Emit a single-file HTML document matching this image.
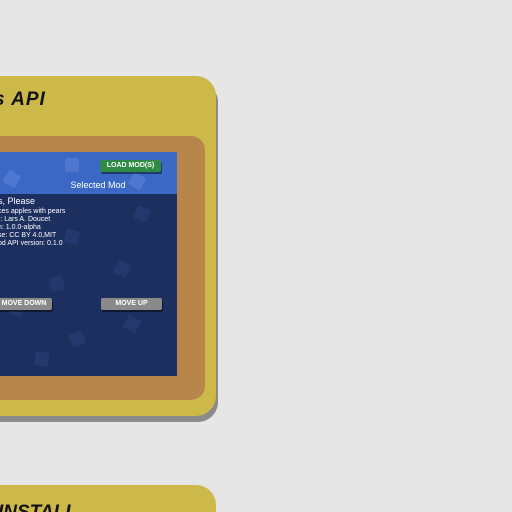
<!DOCTYPE html>
<html style="width:512px;height:512px;overflow:hidden"><head><style>
body{margin:0;width:512px;height:512px;background:#e6e6e6;position:relative;overflow:hidden;font-family:"Liberation Sans",sans-serif}
.a{position:absolute}
.card{background:#cdb84a;border-radius:20px;box-shadow:2px 6px 0 #8a8a8a}
.btn{position:absolute;height:12px;border-radius:2px;color:#fff;font-size:7px;font-weight:bold;text-align:center;line-height:12px;box-shadow:1px 2px 0 rgba(0,0,0,.45)}
.t{position:absolute;left:-2px;color:#fff;font-size:7px;white-space:nowrap}
.d{position:absolute;width:14px;height:14px;background:rgba(80,110,190,.15);border-radius:2px}
</style></head><body>
<div class="a card" style="left:-40px;top:76px;width:256px;height:340px"></div>
<div class="a" style="left:-6px;top:89px;font-size:19px;font-weight:bold;font-style:italic;color:#111;letter-spacing:1px">s API</div>
<div class="a" style="left:-30px;top:136px;width:235px;height:264px;background:#b8864a;border-radius:14px"></div>
<div class="a" style="left:-10px;top:152px;width:187px;height:224px;background:#1c2f5e;overflow:hidden">
 <div class="a" style="left:0;top:0;width:187px;height:42px;background:#3a68c4"></div>
 <div class="d" style="left:75px;top:6px;background:rgba(120,150,230,.35)"></div>
 <div class="d" style="left:140px;top:22px;transform:rotate(30deg);background:rgba(120,150,230,.35)"></div>
 <div class="d" style="left:15px;top:20px;transform:rotate(30deg);background:rgba(120,150,230,.35)"></div>
 <div class="d" style="left:145px;top:55px;transform:rotate(20deg)"></div>
 <div class="d" style="left:75px;top:78px;transform:rotate(15deg)"></div>
 <div class="d" style="left:125px;top:110px;transform:rotate(25deg)"></div>
 <div class="d" style="left:60px;top:125px;transform:rotate(-15deg)"></div>
 <div class="d" style="left:20px;top:150px;transform:rotate(20deg)"></div>
 <div class="d" style="left:135px;top:165px;transform:rotate(30deg)"></div>
 <div class="d" style="left:80px;top:180px;transform:rotate(-20deg)"></div>
 <div class="d" style="left:45px;top:200px;transform:rotate(10deg)"></div>
</div>
<div class="a" style="left:0;top:180px;width:196px;text-align:center;color:#fff;font-size:9px">Selected Mod</div>
<div class="btn" style="left:100px;top:160px;width:61px;background:#2e8a45">LOAD MOD(S)</div>
<div class="t" style="top:196px;font-size:9px">s, Please</div>
<div class="t" style="top:208px">ces apples with pears</div>
<div class="t" style="top:216px">r: Lars A. Doucet</div>
<div class="t" style="top:224px">n: 1.0.0-alpha</div>
<div class="t" style="top:232px">se: CC BY 4.0,MIT</div>
<div class="t" style="top:240px">od API version: 0.1.0</div>
<div class="btn" style="left:-4px;top:298px;width:56px;background:#8a8a8a">MOVE DOWN</div>
<div class="btn" style="left:101px;top:298px;width:61px;background:#8a8a8a">MOVE UP</div>
<div class="a" style="left:-40px;top:485px;width:256px;height:27px;background:#cdb84a;border-radius:20px 20px 0 0;overflow:hidden">
 <div class="a" style="left:38px;top:17px;font-size:19px;font-weight:bold;font-style:italic;color:#111;white-space:nowrap">INSTALL</div>
</div>
</body></html>
